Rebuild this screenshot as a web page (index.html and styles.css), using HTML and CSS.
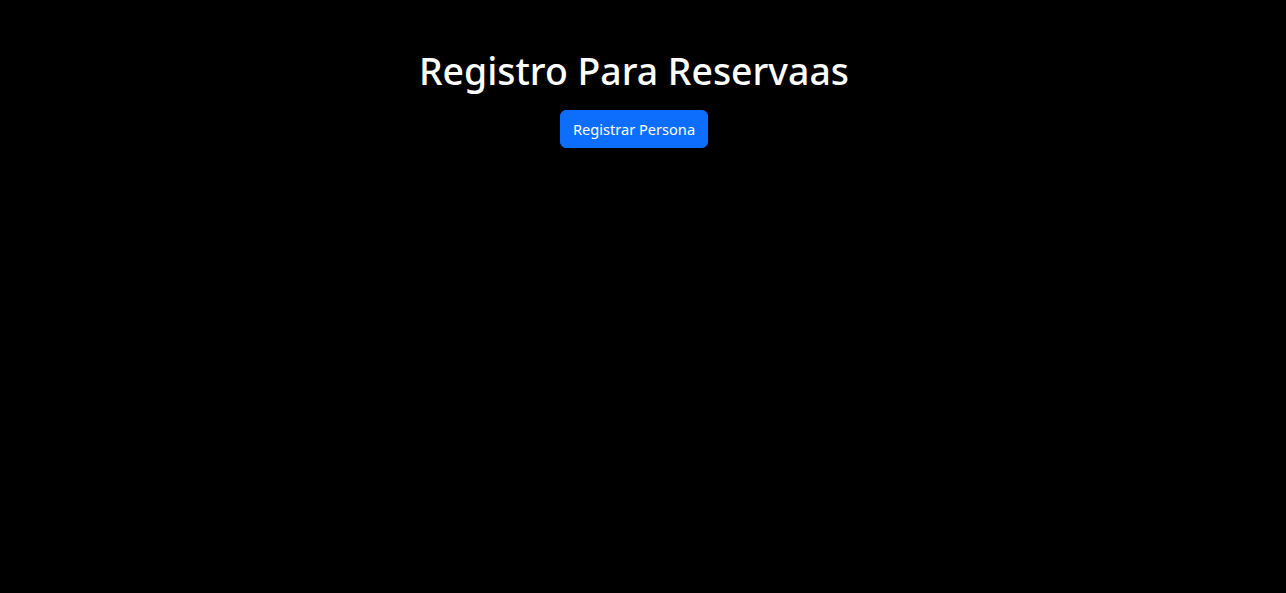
FILE: index.html
```html
<!DOCTYPE html>
<html lang="es">
<head>
<meta charset="utf-8">
<title>Registro Para Reservaas</title>
<link rel="stylesheet" href="styles.css">
</head>
<body>
<main class="page">
  <h1 class="title">Registro Para Reservaas</h1>
  <div class="actions">
    <button class="btn-primary" type="button">Registrar Persona</button>
  </div>
</main>
</body>
</html>
```
FILE: styles.css
```css
html, body {
  margin: 0;
  background: #000;
  color: #fff;
  font-family: "Noto Sans", "Open Sans", sans-serif;
}
.page {
  padding: 47px 18px 0 0;
  text-align: center;
}
.title {
  margin: 0 0 15px;
  font-size: 37.4px;
  font-weight: 500;
  line-height: 48px;
}
.actions {
  display: flex;
  justify-content: center;
}
.btn-primary {
  box-sizing: border-box;
  height: 38px;
  padding: 6px 12px;
  font-family: inherit;
  font-size: 14.6px;
  line-height: 24px;
  color: #fff;
  background: #0d6efd;
  border: 1px solid #0d6efd;
  border-radius: 6px;
  cursor: pointer;
}
```
